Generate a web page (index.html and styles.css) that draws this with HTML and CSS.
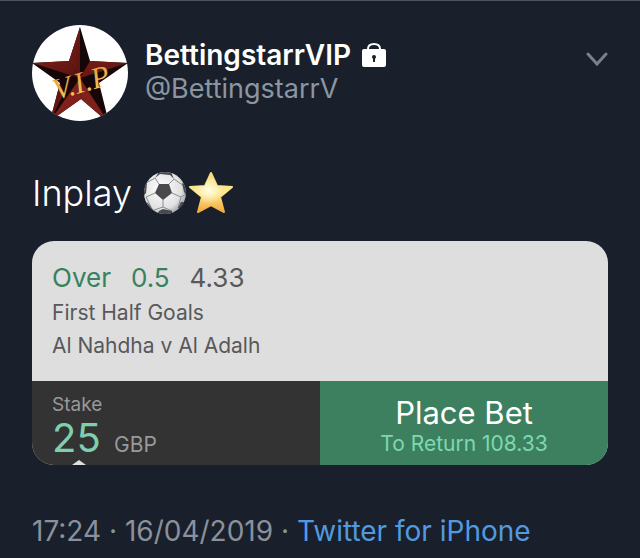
FILE: index.html
```html
<!DOCTYPE html>
<html lang="en">

<head>
    <meta charset="UTF-8">
    <meta name="viewport" content="width=device-width, initial-scale=1.0">
    <title>BettingstarrVIP</title>
    <link rel="stylesheet" href="styles.css">
</head>

<body>
    <article class="tweet">
        <header class="tweet-header">
            <svg class="avatar" viewBox="0 0 96 96" role="img" aria-label="V.I.P star">
                <defs>
                    <clipPath id="avatarClip">
                        <circle cx="48" cy="48" r="48" />
                    </clipPath>
                    <linearGradient id="red" x1="0" y1="0" x2="1" y2="1">
                        <stop offset="0" stop-color="#7a1c17" />
                        <stop offset="1" stop-color="#561411" />
                    </linearGradient>
                    <linearGradient id="gold" x1="0" y1="0" x2="0" y2="1">
                        <stop offset="0" stop-color="#e0943a" />
                        <stop offset="1" stop-color="#f3cf62" />
                    </linearGradient>
                </defs>
                <g clip-path="url(#avatarClip)">
                    <rect width="96" height="96" fill="#fff" />
                    <path fill="#160607" d="M48 2L58 36L96 38L67 58L77 98L49 74L18 96L28 58L0 38L37 36Z" />
                    <path fill="url(#red)" d="M48 2L37 36L48 53Z" />
                    <path fill="url(#red)" d="M96 38L58 36L48 53Z" />
                    <path fill="#80201a" d="M77 98L49 74L48 53Z" />
                    <path fill="#80201a" d="M18 96L49 74L48 53Z" />
                    <path fill="url(#red)" d="M0 38L37 36L48 53Z" />
                    <path fill="#64160f" d="M18 96L28 58L32 68Z" />
                </g>
                <text class="avatar-text" x="24" y="75" transform="rotate(-16 24 75)" fill="url(#gold)">V.I.P</text>
            </svg>
            <div class="user">
                <div class="name">
                    <span>BettingstarrVIP</span>
                    <svg class="lock" viewBox="0 0 24 24" role="img" aria-label="Protected account">
                        <path fill="none" stroke="#fff" stroke-width="2" d="M6 9V6C6 3 8 1 12 1S18 3 18 6V9" />
                        <rect y="6" width="24" height="18" rx="2" fill="#fff" />
                        <circle cx="12" cy="14" r="2" fill="#19202b" />
                        <path fill="#19202b" d="M11 14h2v5h-2z" />
                    </svg>
                </div>
                <div class="handle">@BettingstarrV</div>
            </div>
            <button class="more" type="button" aria-label="More">
                <svg viewBox="0 0 22 14" width="22" height="14">
                    <path d="M2 2L11 12L20 2" />
                </svg>
            </button>
        </header>

        <p class="text">
            <span>Inplay</span>
            <span class="emojis">
                <svg class="emoji" viewBox="0 0 44 44" role="img" aria-label="Football">
                    <defs>
                        <radialGradient id="ball" cx="0.4" cy="0.4" r="0.65">
                            <stop offset="0" stop-color="#fff" />
                            <stop offset="0.75" stop-color="#e0e0e0" />
                            <stop offset="1" stop-color="#a4a4a6" />
                        </radialGradient>
                        <clipPath id="ballClip">
                            <circle cx="22" cy="22" r="21" />
                        </clipPath>
                    </defs>
                    <circle cx="22" cy="22" r="21" fill="url(#ball)" />
                    <g clip-path="url(#ballClip)">
                        <path fill="none" stroke="#8b8d90" d="M16 13L12 7M26 13L31 8M29 22L38 26M20 29L20 36M12 22L3 26M12 7L3 12M31 8L41 15M38 26L43 23M38 26L35 37M20 36L29 40M20 36L11 39M3 26L8 36" />
                        <path fill="#48494c" d="M16 13L26 13L29 22L20 29L12 22Z" />
                        <path fill="#48494c" d="M12 7L16 1L28 1L31 8L27 4L17 3ZM0 14L4 12L3 22L0 26ZM39 12L43 14L44 25L41 21ZM16 40L20 38L29 40L29 44L14 44ZM4 31L8 36L11 40L5 40ZM35 37L38 31L42 31L37 39Z" />
                    </g>
                </svg>
                <svg class="emoji" viewBox="0 0 44 44" role="img" aria-label="Star">
                    <defs>
                        <linearGradient id="starFill" x1="0" y1="0" x2="0" y2="1">
                            <stop offset="0" stop-color="#f6d981" />
                            <stop offset="0.5" stop-color="#fde98c" />
                            <stop offset="1" stop-color="#f2a93b" />
                        </linearGradient>
                        <radialGradient id="starGlow" cx="0.45" cy="0.45" r="0.35">
                            <stop offset="0" stop-color="#fffde6" />
                            <stop offset="1" stop-color="#fffde6" stop-opacity="0" />
                        </radialGradient>
                    </defs>
                    <path fill="url(#starFill)" stroke="url(#starFill)" stroke-width="2" stroke-linejoin="round" d="M22 2L28 15L43 16L31 26L35 41L22 34L9 41L13 26L1 16L16 15Z" />
                    <path fill="url(#starGlow)" d="M22 2L28 15L43 16L31 26L35 41L22 34L9 41L13 26L1 16L16 15Z" />
                </svg>
            </span>
        </p>

        <form class="betslip">
            <div class="selection">
                <div class="odds"><span class="pick">Over</span><span class="pick">0.5</span><span>4.33</span></div>
                <div class="market">First Half Goals</div>
                <div class="market">Al Nahdha v Al Adalh</div>
            </div>
            <div class="actions">
                <div class="stake">
                    <label for="stake">Stake</label>
                    <div class="amount">
                        <input type="text" id="stake" name="stake" value="25" inputmode="decimal">
                        <span class="currency">GBP</span>
                    </div>
                    <svg class="pointer" viewBox="0 0 14 5">
                        <path fill="#e0e0e0" d="M0 5L7 0L14 5Z" />
                    </svg>
                </div>
                <button class="place" type="button">
                    <span class="place-title">Place Bet</span>
                    <span class="place-return">To Return 108.33</span>
                </button>
            </div>
        </form>

        <footer class="meta">17:24 · 16/04/2019 · <a href="#">Twitter for iPhone</a></footer>
    </article>
</body>

</html>
```
FILE: styles.css
```css
* {
    box-sizing: border-box;
}

body {
    margin: 0;
    background-color: #19202b;
    color: #fff;
    font-family: Inter, "Liberation Sans", sans-serif;
}

.tweet {
    padding: 24px 32px 8px;
    border-top: 1px solid #4a5463;
}

.tweet-header {
    display: flex;
    align-items: flex-start;
    gap: 17px;
}

.avatar {
    flex: none;
    width: 96px;
    height: 96px;
}

.avatar-text {
    font: italic 30px "Liberation Serif", serif;
}

.user {
    flex: 1;
    padding-top: 13px;
}

.name {
    display: flex;
    align-items: center;
    gap: 11px;
    font-size: 28px;
    font-weight: 600;
    line-height: 34px;
}

.lock {
    width: 24px;
    height: 24px;
}

.handle {
    color: #8b96a2;
    font-size: 27px;
    line-height: 34px;
}

.more {
    display: flex;
    margin-top: 27px;
    padding: 0;
    border: none;
    background: none;
}

.more path {
    fill: none;
    stroke: #77818d;
    stroke-width: 3;
    stroke-linecap: round;
}

.text {
    display: flex;
    align-items: center;
    gap: 11px;
    margin: 47px 0 23px;
    font-size: 36px;
    font-weight: 300;
    line-height: 50px;
}

.emojis {
    display: flex;
    gap: 2px;
}

.emoji {
    width: 44px;
    height: 44px;
}

.betslip {
    overflow: hidden;
    border-radius: 22px;
    background-color: #dedede;
}

.selection {
    padding: 18px 20px 19px;
    color: #58585a;
}

.odds {
    display: flex;
    gap: 20px;
    font-size: 26px;
    line-height: 37px;
}

.pick {
    color: #368260;
}

.market {
    font-size: 21px;
    line-height: 33px;
}

.actions {
    display: grid;
    grid-template-columns: 1fr 1fr;
}

.stake {
    position: relative;
    padding: 12px 20px 8px;
    background-color: #333;
    color: #999;
}

.stake label {
    display: block;
    font-size: 19px;
    line-height: 24px;
}

.amount {
    display: flex;
    align-items: baseline;
    gap: 12px;
}

.amount input {
    width: 50px;
    height: 40px;
    padding: 0;
    border: none;
    background: none;
    color: #7dcfae;
    font-family: inherit;
    font-size: 40px;
}

.currency {
    font-size: 21px;
}

.pointer {
    position: absolute;
    bottom: 0;
    left: 40px;
    width: 14px;
    height: 5px;
}

.place {
    display: flex;
    flex-direction: column;
    align-items: center;
    justify-content: center;
    padding: 6px 0 0;
    border: none;
    background-color: #3d8060;
    color: #fff;
    font-family: inherit;
}

.place-title {
    font-size: 31px;
    line-height: 36px;
}

.place-return {
    color: #7dd8b0;
    font-size: 21px;
    line-height: 26px;
}

.meta {
    margin-top: 49px;
    color: #8b919c;
    font-size: 28px;
    line-height: 34px;
}

.meta a {
    color: #529ae0;
    text-decoration: none;
}
```
